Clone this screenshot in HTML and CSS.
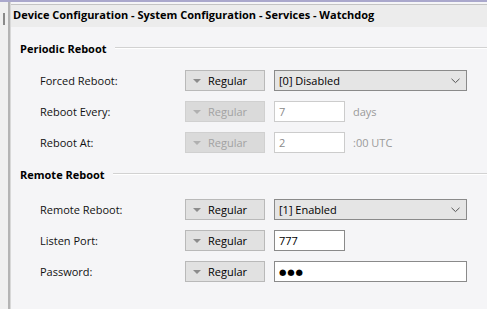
FILE: index.html
```html
<!DOCTYPE html>
<html>
<head>
<meta charset="utf-8">
<link rel="stylesheet" href="styles.css">
</head>
<body>
<div class="window">
  <div class="sidebar"><div class="grip"></div></div>
  <div class="main">
    <div class="header">Device Configuration - System Configuration - Services - Watchdog</div>
    <div class="content">
      <div class="group-title"><span>Periodic Reboot</span><div class="rule"></div></div>
      <div class="rows">
        <div class="row">
          <div class="label">Forced Reboot:</div>
          <div class="mode"><span class="tri"></span>Regular</div>
          <div class="select">[0] Disabled<svg class="chev" width="9" height="6" viewBox="0 0 9 6"><path d="M0.5 0.8 L4.5 4.6 L8.5 0.8" fill="none" stroke="#555" stroke-width="1"/></svg></div>
        </div>
        <div class="row">
          <div class="label">Reboot Every:</div>
          <div class="mode disabled"><span class="tri"></span>Regular</div>
          <div class="input short disabled">7</div>
          <div class="suffix">days</div>
        </div>
        <div class="row">
          <div class="label">Reboot At:</div>
          <div class="mode disabled"><span class="tri"></span>Regular</div>
          <div class="input short disabled">2</div>
          <div class="suffix">:00 UTC</div>
        </div>
      </div>
      <div class="group-title second"><span>Remote Reboot</span><div class="rule"></div></div>
      <div class="rows">
        <div class="row">
          <div class="label">Remote Reboot:</div>
          <div class="mode"><span class="tri"></span>Regular</div>
          <div class="select">[1] Enabled<svg class="chev" width="9" height="6" viewBox="0 0 9 6"><path d="M0.5 0.8 L4.5 4.6 L8.5 0.8" fill="none" stroke="#555" stroke-width="1"/></svg></div>
        </div>
        <div class="row">
          <div class="label">Listen Port:</div>
          <div class="mode"><span class="tri"></span>Regular</div>
          <div class="input short">777</div>
        </div>
        <div class="row">
          <div class="label">Password:</div>
          <div class="mode"><span class="tri"></span>Regular</div>
          <div class="input long pw">●●●</div>
        </div>
      </div>
    </div>
  </div>
</div>
</body>
</html>
```
FILE: styles.css
```css
* { box-sizing: border-box; }
html, body { margin: 0; padding: 0; }
body {
  width: 487px;
  height: 309px;
  overflow: hidden;
  font-family: "Open Sans", "Noto Sans", sans-serif;
  font-size: 11px;
  color: #000000;
  background: #f5f5f7;
}
.window {
  display: flex;
  height: 309px;
  border-top: 2px solid #aaa8cc;
}
.sidebar {
  width: 10px;
  background: #f0f0f0;
  border-right: 2px solid #b4b4b4;
  position: relative;
}
.grip {
  position: absolute;
  left: 3px;
  top: 11px;
  width: 2px;
  height: 12px;
  background: #8a8a8a;
}
.main {
  flex: 1;
  display: flex;
  flex-direction: column;
  background: #f5f5f7;
  border-left: 1px solid #d8d8d8;
}
.header {
  height: 23px;
  margin-top: 2px;
  border-top: 1px solid #c4c4c4;
  background: #ececec;
  font-weight: 700;
  font-size: 11px;
  padding-left: 2px;
  line-height: 20px;
  white-space: nowrap;
}
.content {
  padding-top: 12px;
}
.group-title {
  display: flex;
  align-items: center;
  gap: 8px;
  height: 18px;
  padding-left: 9px;
  font-weight: 700;
  font-size: 11px;
}
.group-title.second { margin-top: 12px; }
.rule {
  flex: 1;
  height: 2px;
  border-top: 1px solid #d2d2d2;
  border-bottom: 1px solid #ffffff;
}
.rows {
  display: flex;
  flex-direction: column;
  gap: 10px;
  margin-top: 13px;
}
.group-title.second + .rows { margin-top: 16px; }
.row {
  display: flex;
  align-items: center;
  height: 21px;
  padding-left: 29px;
}
.label {
  width: 145px;
  color: #111;
}
.mode {
  width: 80px;
  height: 21px;
  display: flex;
  align-items: center;
  background: #e1e1e1;
  border: 1px solid #b9b9b9;
  padding-left: 7px;
  gap: 7px;
  margin-right: 9px;
}
.mode.disabled {
  background: #dadada;
  border-color: #d0d0d0;
  color: #a2a2a2;
}
.tri {
  width: 0;
  height: 0;
  border-left: 4px solid transparent;
  border-right: 4px solid transparent;
  border-top: 4px solid #8c8c8c;
}
.mode.disabled .tri { border-top-color: #b0b0b0; }
.select {
  width: 193px;
  height: 21px;
  display: flex;
  align-items: center;
  justify-content: space-between;
  background: #e5e5e5;
  border: 1px solid #8a8a8a;
  padding: 0 6px 0 4px;
}
.input {
  height: 21px;
  display: flex;
  align-items: center;
  background: #ffffff;
  border: 1px solid #8a8a8a;
  padding-left: 4px;
}
.input.short { width: 71px; }
.input.long { width: 193px; }
.input.disabled {
  border-color: #cccccc;
  color: #8a8a8a;
}
.input.pw { font-size: 8.5px; letter-spacing: 0.8px; color: #000; font-family: "DejaVu Sans", sans-serif; }
.suffix {
  margin-left: 8px;
  color: #9a9a9a;
}
```
